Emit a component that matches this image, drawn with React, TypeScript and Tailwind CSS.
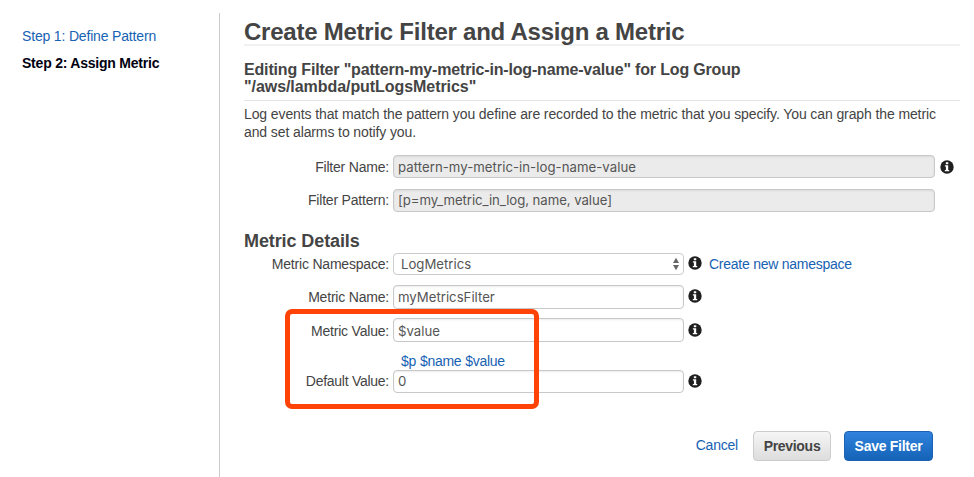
import type { ReactNode } from "react";

const arial = "font-['Liberation_Sans',Arial,sans-serif]";

function InfoIcon({ className = "ml-1 mb-px" }: { className?: string }) {
  return (
    <svg className={`size-[14px] shrink-0 ${className}`} viewBox="0 0 14 14" aria-hidden="true">
      <circle cx="7" cy="7" r="6.7" fill="#1f1f1f" />
      <rect x="5.8" y="2.2" width="2.5" height="2" rx="0.4" fill="#fff" />
      <path d="M4.9 5.2H8.2V9.9H9.2V11.2H4.8V9.9H5.9V6.5H4.9Z" fill="#fff" />
    </svg>
  );
}

function Row({
  label,
  className,
  labelClass = "",
  children,
}: {
  label: ReactNode;
  className: string;
  labelClass?: string;
  children: ReactNode;
}) {
  return (
    <div className={`flex items-center ${className}`}>
      <div className={`w-[145px] shrink-0 text-right text-[14px] leading-[18px] tracking-[-0.2px] ${labelClass}`}>{label}</div>
      <div className="ml-1 flex items-center">{children}</div>
    </div>
  );
}

const field =
  "shrink-0 rounded-[4px] border border-[#c8c8c8] pl-1 font-['Inter',sans-serif] text-[13.2px] leading-[21px] text-[#555] outline-none shadow-[inset_0_1px_2px_rgba(0,0,0,0.08)]";

export default function App() {
  return (
    <div className={`flex h-[477px] w-[974px] overflow-hidden bg-white text-[#444] ${arial}`}>
      <nav className="mt-[13px] w-[220px] shrink-0 border-r border-[#ccc] pl-[22px] text-[14px] leading-[18px]">
        <div className="mt-[14px] whitespace-nowrap text-[#1762b3]">
          <span className="tracking-[-0.17px]">Step 1: Define Pattern</span>
        </div>
        <div className="mt-[9px] whitespace-nowrap font-bold text-[#000011]">
          <span className="tracking-[-0.22px]">Step 2: Assign Metric</span>
        </div>
      </nav>
      <main className="relative ml-6 w-[716px]">
        <h1 className="mt-[18px] h-[28px] whitespace-nowrap border-b-2 border-[#f1f1f1] text-[24px] font-bold leading-[28px]">
          <span className="tracking-[-0.24px]">Create Metric Filter and Assign a Metric</span>
        </h1>
        <h2 className="mt-[15px] h-[40px] whitespace-nowrap border-b border-[#e5e5e5] text-[16px] font-bold leading-[17px]">
          <span className="tracking-[-0.17px]">Editing Filter "pattern-my-metric-in-log-name-value" for Log Group</span>
          <br />
          <span className="tracking-[-0.06px]">"/aws/lambda/putLogsMetrics"</span>
        </h2>
        <p className="mt-1 h-[36px] whitespace-nowrap text-[14px] leading-[18px] tracking-[-0.107px]">
          <span>Log events that match the pattern you define are recorded to the metric that you specify. You can graph the metric</span>
          <br />
          <span>and set alarms to notify you.</span>
        </p>
        <Row label="Filter Name:" className="mt-[14px] h-[23px]" labelClass="pt-px">
          <input readOnly value="pattern-my-metric-in-log-name-value" className={`${field} h-[23px] w-[542px] bg-[#ebebeb] tracking-[0.04px]`} />
          <InfoIcon className="ml-[5px]" />
        </Row>
        <Row label="Filter Pattern:" className="mt-[11px] h-[23px]" labelClass="pb-px">
          <input readOnly value="[p=my_metric_in_log, name, value]" className={`${field} h-[23px] w-[542px] bg-[#ebebeb] pb-px tracking-[-0.06px]`} />
        </Row>
        <h3 className="mt-[19px] h-[20px] whitespace-nowrap text-[18px] font-bold leading-[20px]">
          <span className="tracking-[-0.1px]">Metric Details</span>
        </h3>
        <Row label="Metric Namespace:" className="mt-[2px] h-[22px]">
          <div className="flex h-[22px] w-[291px] items-center justify-between rounded-[4px] border border-[#ccc] pl-[7px] pr-[3px] font-['Inter',sans-serif] text-[13.2px] leading-[20px] text-[#555]">
            <span>LogMetrics</span>
            <svg className="h-[14px] w-[8px]" viewBox="0 0 8 14" aria-hidden="true">
              <path d="M4 0.8L7 6H1ZM4 13.2L7 8H1Z" fill="#666" />
            </svg>
          </div>
          <InfoIcon className="mb-[2px] ml-1" />
          <a className="ml-[7px] whitespace-nowrap text-[14px] leading-[18px] tracking-[-0.25px] text-[#1762b3]">Create new namespace</a>
        </Row>
        <Row label="Metric Name:" className="mt-[10px] h-[24px]">
          <input readOnly value="myMetricsFilter" className={`${field} h-[24px] w-[291px] bg-white`} />
          <InfoIcon className="mb-[2px] ml-1" />
        </Row>
        <Row label="Metric Value:" className="mt-[9px] h-[24px]" labelClass="pt-px">
          <input readOnly value="$value" className={`${field} h-[24px] w-[291px] bg-white pt-px`} />
          <InfoIcon />
        </Row>
        <div className="ml-[157px] mt-[11px] flex h-[17px] gap-1 text-[14px] leading-[17px] tracking-[-0.3px] text-[#1762b3]">
          <a>$p</a>
          <a>$name</a>
          <a>$value</a>
        </div>
        <Row label="Default Value:" className="h-[23px]" labelClass="pb-px tracking-[-0.27px]">
          <input readOnly value="0" className={`${field} h-[23px] w-[291px] bg-white pb-px`} />
          <InfoIcon />
        </Row>
        <div className="mr-[27px] mt-[38px] flex h-[30px] items-center justify-end">
          <a className="mb-[3px] mr-[15px] text-[14px] leading-[18px] tracking-[-0.22px] text-[#1762b3]">Cancel</a>
          <button className="mr-[13px] h-[30px] w-[78px] whitespace-nowrap rounded-[4px] border border-[#ccc] bg-linear-to-b from-[#f5f5f5] to-[#dddddd] text-[14px] font-bold leading-[28px] tracking-[-0.3px]">
            Previous
          </button>
          <button className="h-[30px] w-[89px] whitespace-nowrap rounded-[4px] border border-[#1b62b5] bg-linear-to-b from-[#2f82dc] to-[#1463b8] text-[14px] font-bold leading-[28px] tracking-[-0.27px] text-white">
            Save Filter
          </button>
        </div>
        <div className="pointer-events-none absolute left-[41px] top-[309px] h-[100px] w-[254px] rounded-[7px] border-[5px] border-[#ff4206]" />
      </main>
    </div>
  );
}
